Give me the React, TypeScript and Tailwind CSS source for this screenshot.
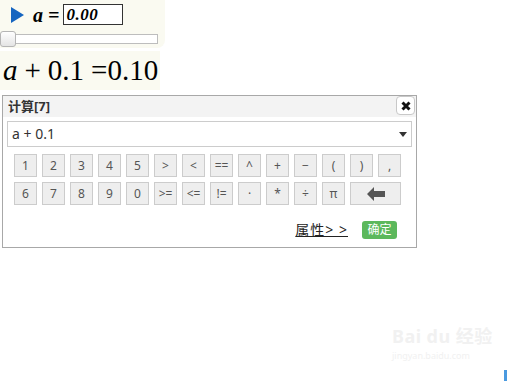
import React from "react";

const row1 = ["1", "2", "3", "4", "5", ">", "<", "==", "^", "+", "−", "(", ")", ","];
const row2 = ["6", "7", "8", "9", "0", ">=", "<=", "!=", "·", "*", "÷", "π"];

function Key({ label, wide }: { label: React.ReactNode; wide?: boolean }) {
  return (
    <div
      className={
        "h-[23px] flex items-center justify-center bg-[#eeeeee] border border-[#cccccc] text-[12px] text-[#555555] leading-none " +
        (wide ? "col-span-2" : "")
      }
    >
      {label}
    </div>
  );
}

export default function App() {
  return (
    <div
      className="relative w-[507px] h-[381px] bg-white overflow-hidden"
      style={{ fontFamily: '"Noto Sans", "Noto Sans CJK SC", sans-serif' }}
    >
      {/* slider panel */}
      <div className="w-[165px] h-[48px] bg-[#fafaf1] rounded-br-[8px] pt-[4px]">
        <div className="flex items-center h-[21px]">
          <svg width="13" height="16" viewBox="0 0 13 16" className="ml-[11px]">
            <polygon points="0,0 13,8 0,16" fill="#1565c0" />
          </svg>
          <span
            className="ml-[9px] text-[20px] font-bold italic text-black leading-none"
            style={{ fontFamily: '"Liberation Serif", serif' }}
          >
            a =
          </span>
          <div
            className="ml-[4px] w-[60px] h-[21px] border border-[#333333] bg-white flex items-center pl-[2px] text-[17px] font-bold italic text-black leading-none tracking-[0.5px]"
            style={{ fontFamily: '"Liberation Serif", serif' }}
          >
            0.00
          </div>
        </div>
        <div className="relative mt-[6px] h-[14px]">
          <div className="absolute left-[8px] top-[3px] w-[150px] h-[10px] bg-white border border-[#bdbdbd]" />
          <div className="absolute left-0 top-0 w-[16px] h-[16px] rounded-[3px] border border-[#b5b5b5] bg-gradient-to-b from-[#ffffff] to-[#e4e4e4]" />
        </div>
      </div>

      {/* formula */}
      <div
        className="mt-[3px] w-[160px] h-[39px] bg-[#fafaf1] flex items-center pl-[3px] text-[29px] text-black leading-none whitespace-nowrap"
        style={{ fontFamily: '"Liberation Serif", serif' }}
      >
        <span className="italic">a</span>
        <span className="ml-[7px]">+</span>
        <span className="ml-[7px]">0.1</span>
        <span className="ml-[7px]">=0.10</span>
      </div>

      {/* dialog */}
      <div className="relative mt-[5px] ml-[2px] w-[415px] h-[153px] border border-[#a8a8a8] bg-white">
        <div className="h-[21px] bg-[#f3f3f3] flex items-center pl-[5px] text-[13px] font-bold text-[#333333] leading-none">
          计算[7]
        </div>
        <div className="absolute right-[1px] top-[0px] w-[19px] h-[19px] bg-white border border-[#c8c8c8] rounded-[4px] flex items-center justify-center">
          <svg width="10" height="10" viewBox="0 0 10 10">
            <path d="M1.5 1.5 L8.5 8.5 M8.5 1.5 L1.5 8.5" stroke="#111111" strokeWidth="3" strokeLinecap="butt" />
          </svg>
        </div>
        <div className="mx-[4px] mt-[4px] h-[26px] border border-[#cccccc] flex items-center justify-between pl-[4px] pr-[4px]">
          <span className="text-[14px] text-[#333333] leading-none">a + 0.1</span>
          <svg width="8" height="5" viewBox="0 0 8 5">
            <polygon points="0,0 8,0 4,5" fill="#333333" />
          </svg>
        </div>
        <div className="ml-[11px] mt-[7px] grid grid-cols-[repeat(14,23px)] gap-[5px]">
          {row1.map((k, i) => (
            <Key key={"a" + i} label={k} />
          ))}
          {row2.map((k, i) => (
            <Key key={"b" + i} label={k} />
          ))}
          <Key
            wide
            label={
              <svg width="18" height="14" viewBox="0 0 18 14">
                <polygon points="0,7 7,0 7,4 18,4 18,10 7,10 7,14" fill="#555555" />
              </svg>
            }
          />
        </div>
        <div className="flex items-center justify-end mt-[16px] pr-[19px]">
          <span className="text-[14px] text-[#222222] underline leading-none tracking-[1px]">属性&gt; &gt;</span>
          <div className="ml-[14px] w-[35px] h-[18px] rounded-[3px] bg-[#5cb85c] flex items-center justify-center text-[12px] text-white leading-none">
            确定
          </div>
        </div>
      </div>

      {/* watermark */}
      <div className="absolute left-[392px] top-[326px] text-[#f1f1f1] leading-none">
        <div className="text-[18px] font-bold tracking-wide leading-[20px]">Bai du 经验</div>
        <div className="text-[9px] leading-[11px] mt-[4px]">jingyan.baidu.com</div>
      </div>
      <div className="absolute left-[504px] top-[370px] w-[3px] h-[11px] bg-[#4a9ae0]" />
    </div>
  );
}
